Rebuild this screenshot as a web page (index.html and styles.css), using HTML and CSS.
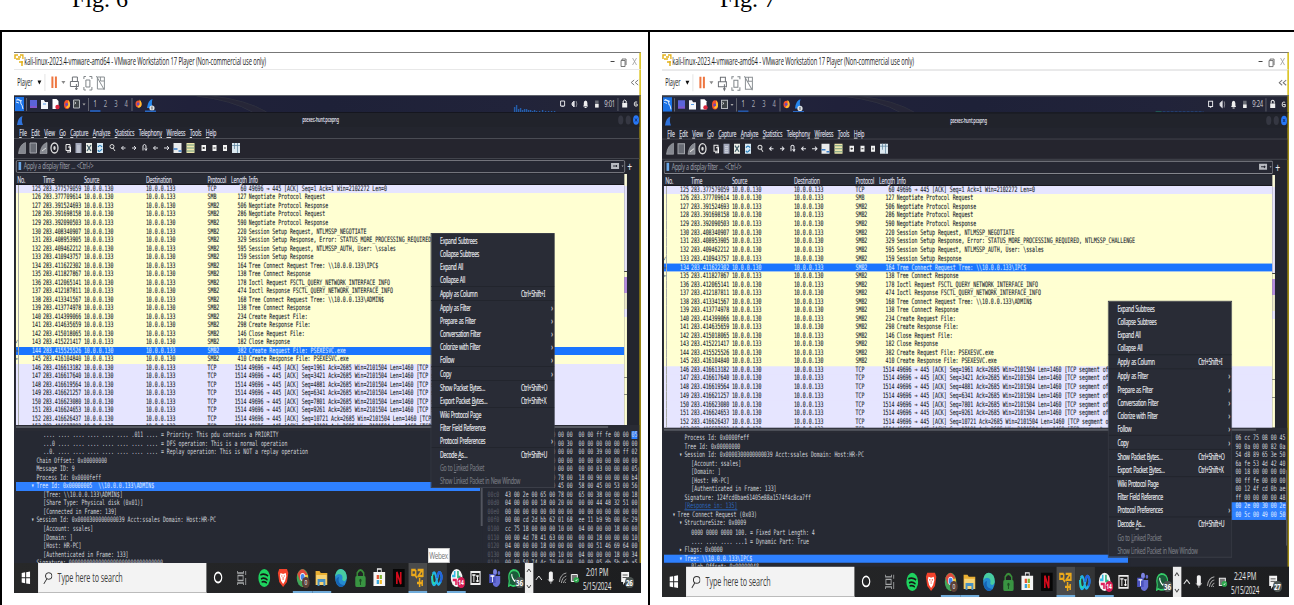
FILE: index.html
```html
<!DOCTYPE html>
<html lang="en">
<head>
<meta charset="utf-8">
<title>Figures</title>
<link rel="stylesheet" href="styles.css">
</head>
<body>
<div class="captions"><div class="caption">Fig. 6</div><div class="caption">Fig. 7</div></div>
<div class="figures">
  <div class="figure"><div class="shot"><div class="screen" id="left"></div></div></div>
  <div class="figure"><div class="shot shot-tall"><div class="screen" id="right"></div></div></div>
</div>
<script src="app.js"></script>
</body>
</html>
```

FILE: styles.css
```css
* { box-sizing: border-box; }
body { margin: 0; width: 1294px; height: 605px; overflow: hidden; background: #fff; }
.captions { display: grid; grid-template-columns: 648px 646px; height: 30px; overflow: hidden; font: 24px/28px "Liberation Serif", serif; color: #000; }
.caption { padding-left: 72px; margin-top: -15px; height: 28px; }
.figures { display: grid; grid-template-columns: 648px 646px; height: 575px; border-top: 2px solid #000; }
.figure { border-left: 2px solid #000; padding: 20px 0 0 12px; }
.shot { width: 627px; height: 541px; overflow: hidden; }
.shot-tall { height: 545px; }
/* the virtual desktop is laid out wide and squeezed into the figure */
.screen { position: relative; width: 964.6px; height: 541px; transform: scale(.65, 1); transform-origin: 0 0; display: flex; flex-direction: column; font: 7.7px/10px "Noto Sans", sans-serif; color: #d9dbe0; background: #23252e; white-space: nowrap; }
.shot-tall .screen { transform: scale(.65, 1.0074); }
svg { display: block; flex: none; }
u { text-underline-offset: 1px; text-decoration-thickness: .6px; }

.title { height: 17.5px; background: #fff; border-top: 1px solid #777; border-bottom: 1px solid #e8e8e8; border-right: 3px solid #dcc52c; display: flex; align-items: center; color: #1a1a1a; font: 11.3px/15px "Open Sans", sans-serif; letter-spacing: -.18px; }
.title-text { padding: 0 0 0 1px; transform: scaleX(.79); transform-origin: 0 0; }
.player { height: 25.5px; background: #fff; border-right: 3px solid #dcc52c; display: flex; align-items: center; color: #222; font: 10.6px/14px "Open Sans", sans-serif; padding-left: 5px; letter-spacing: -.2px; }
.player-text { width: 30.5px; transform: scaleX(.8); transform-origin: 0 0; }
.spring { flex: 1; }

.kali { height: 17px; border-top: 1px solid #60636b; border-right: 3px solid #9b8612; background: linear-gradient(90deg, #25293a, #20213a 28%, #1e2138 50%, #21233a 80%, #242635); display: flex; font: 9px/16px "Noto Sans", sans-serif; }
.ws { width: 15.9px; text-align: center; color: #a7a9b4; flex: none; }
.ws-on { border-bottom: 2px solid #2457a8; color: #c8cad2; }
.clock { width: 23px; text-align: center; letter-spacing: -.3px; color: #cacbd2; }

.app { height: 451px; border-right: 3px solid #9b8612; display: flex; flex-direction: column; background: #23252e; }
.apptitle { height: 15px; display: flex; align-items: center; background: #21232b; border-top: 1px solid #15161f; }
.apptitle-text { flex: 1; text-align: center; font-size: 6.4px; letter-spacing: -.35px; font-weight: 600; }
.menubar { height: 12.5px; display: flex; padding: 1px 0 0 8px; font-size: 8.6px; letter-spacing: -.32px; border-bottom: 1px solid #4a4c54; }
.menus { display: flex; gap: 7.5px; transform: scaleX(.925); transform-origin: 0 0; -webkit-text-stroke: .15px; }
.tools { height: 19.5px; border-bottom: 1px solid #42444c; background: #25252e; }
.filterbar { height: 15px; display: flex; align-items: center; padding-left: 3px; }
.filter { width: 937px; height: 12.5px; border: 1.4px solid #84868d; border-radius: 2px; background: #262833; display: flex; align-items: center; font-size: 8.3px; letter-spacing: -.42px; word-spacing: .5px; color: #9a9da6; }
.mark { width: 4px; height: 8px; background: #6aa8e8; margin: 0 4px 0 3px; }
.plus { width: 14px; text-align: center; font: 13px/10px "Noto Sans", sans-serif; color: #eee; }

.packets { height: 252px; display: flex; padding-left: 3px; overflow: hidden; }
.list { width: 936px; }
.grid { display: grid; grid-template-columns: 38.4px 3.2px 63px 95.4px 94.8px 36px 23.8px 3.6px 1fr; height: 8.525px; }
.head { height: 11px; background: #292c36; font-size: 8.1px; line-height: 11px; letter-spacing: -.38px; color: #d9dbe0; border-bottom: 1px solid #17181d; -webkit-text-stroke: .15px; }
.head :first-child { padding-left: 2px; }
.rows { height: 241px; overflow: hidden; font: 7.52px/8.525px "DejaVu Sans Mono", monospace; color: #20262e; background: #e6e5ff; -webkit-text-stroke: .12px; }
.rows .grid { background: #ffffd2; box-shadow: 0 .6px 0 #ffffd2; }
.rows .tcp { background: #e6e5ff; box-shadow: 0 .6px 0 #e6e5ff; }
.rows .sel { background: #1a75ff; box-shadow: none; color: #d4e5ff; }
.rows .grid > span { position: relative; z-index: 1; }
.num { text-align: right; }
.mark-cell { text-align: right; background: linear-gradient(90deg, transparent 3.5px, #a9aba8 3.5px 4.5px, transparent 4.5px); display: flex; }
.mark-cell i { width: 10px; margin-left: -1px; font-style: normal; color: #555; text-align: left; }
.mark-cell b { flex: 1; font-weight: 400; }
.map { width: 4px; background: linear-gradient(#faf9d8 0 12px, #e6e4fa 12px 97px, #41443a 97px 98px, #ffffd2 98px 103px, #b78de0 103px 119px, #ece9c8 119px 135px, #e7e5ff 135px 143px, #ffffd2 143px 203px, #8c8d78 203px 204px, #ffffd2 204px 220px, #8c8d78 220px 221px, #ffffd2 221px); }
.split { height: 6px; padding: 1px 0 0 3px; background: #292b34; }
.bar { height: 2px; width: 911px; background: #565961; }

.lower { height: 132px; display: flex; padding-left: 3px; font: 7.52px/8.53px "DejaVu Sans Mono", monospace; overflow: hidden; color: #d3d6dc; background: #262933; }
.tree { width: 714px; overflow: hidden; flex: none; }
.line { height: 8.53px; white-space: pre; }
.line.on { background: #2e80ff; color: #e4efff; }
.line.link { color: #2c68bd; text-decoration: underline; text-decoration-thickness: .6px; text-underline-offset: 1px; }
.scroll { width: 4px; flex: none; background: #262933; padding-top: 20px; }
.thumb { width: 3px; height: 75px; background: #52555f; margin-left: 1px; }
.hex { width: 238.5px; flex: none; overflow: hidden; padding-left: 7.5px; }
.off { color: #5d606b; display: inline-block; width: 27px; }
.hi { background: #2e80ff; }
.hex .line.on { box-shadow: 0 .5px 0 #2e80ff; }
.on .off { background: #262933; }
.rail { flex: 1; }
.rail .thumb { height: 75px; margin: 36px 0 0; width: 2px; }

.menu { position: absolute; z-index: 2; left: 641.5px; top: 181.5px; width: 189px; height: 253px; background: #292c36; font-size: 8px; line-height: 13px; letter-spacing: -.45px; word-spacing: .6px; color: #e4e6ea; -webkit-text-stroke: .15px; outline: .5px solid #3b3e48; }
.shot-tall .menu { left: 686.7px; top: 247.8px; }
.item { height: 13px; display: flex; padding-left: 14px; }
.item span { width: 124.5px; }
.item.sub { justify-content: space-between; padding-right: 2px; }
.item b { font-weight: 400; }
.item.off-item { color: #73767e; }
.sep { height: 1px; background: #22252d; }

.taskbar { height: 30px; background: linear-gradient(90deg, #272829, #212224 60%, #1d1e20); display: flex; font-family: "Open Sans", sans-serif; color: #e9e9e9; }
.taskbar > div { flex: none; }
.start { width: 37px; padding: 8px 0 0 11px; }
.search { width: 258.5px; background: #f3f3f3; display: flex; align-items: center; color: #3d3d3d; font-size: 12.3px; letter-spacing: -.1px; border-bottom: 1px solid #bbb; }
.search svg { margin: 0 8px 0 8px; }
.search span { transform: scaleX(.9); transform-origin: 0 0; }
.cell { width: 29.6px; height: 30px; padding: 5px 0 0 4.8px; position: relative; }
.wide { width: 37.2px; padding-left: 8.6px; }
.active { background: #4a4b4c; }
.hover { background: #343536; }
.run { border-bottom: 2px solid #70abd9; }
.badge { position: absolute; left: 16px; top: 14px; font: 700 7.5px/11px "Open Sans", sans-serif; border-radius: 6px; color: #fff; text-align: center; min-width: 12px; }
.red { background: #d51b55; }
.brown { background: #5b4037; font-weight: 400; left: 14px; }
.gray { background: #4c5452; font-size: 9.5px; min-width: 14px; letter-spacing: -.3px; }
.updown { width: 12.5px; background: #ececec; margin-left: 2px; }
.tray { width: 73px; }
.when { width: 50px; font-size: 10.8px; line-height: 13.6px; letter-spacing: -.35px; text-align: center; padding-top: 2px; transform: scaleX(.9); }
.note { width: 29px; margin-left: 12px; position: relative; padding-top: 7px; }
.tooltip { position: absolute; z-index: 2; left: 636.5px; top: 496px; width: 33px; height: 15px; background: #fff; border: 1px solid #c9c9c9; color: #777; font: 9.8px/13px "Open Sans", sans-serif; display: flex; justify-content: center; letter-spacing: -.55px; }
```

FILE: app.js
```js
const A = '10.0.0.130', B = '10.0.0.133';
const seg = n => `49696 → 445 [ACK] Seq=${n} Ack=2685 Win=2101504 Len=1460 [TCP segment of a reassembled PDU]`;
const packets = [
  [125, '377579059', 0, 'TCP', 60, '49696 → 445 [ACK] Seq=1 Ack=1 Win=2102272 Len=0'],
  [126, '377709614', 0, 'SMB', 127, 'Negotiate Protocol Request'],
  [127, '391524693', 1, 'SMB2', 506, 'Negotiate Protocol Response'],
  [128, '391698158', 0, 'SMB2', 286, 'Negotiate Protocol Request'],
  [129, '392090503', 1, 'SMB2', 590, 'Negotiate Protocol Response'],
  [130, '408340907', 0, 'SMB2', 220, 'Session Setup Request, NTLMSSP_NEGOTIATE'],
  [131, '408953905', 1, 'SMB2', 329, 'Session Setup Response, Error: STATUS_MORE_PROCESSING_REQUIRED, NTLMSSP_CHALLENGE'],
  [132, '409462212', 0, 'SMB2', 595, 'Session Setup Request, NTLMSSP_AUTH, User: \\ssales'],
  [133, '410943757', 1, 'SMB2', 159, 'Session Setup Response'],
  [134, '411622302', 0, 'SMB2', 164, 'Tree Connect Request Tree: \\\\10.0.0.133\\IPC$'],
  [135, '411827867', 1, 'SMB2', 138, 'Tree Connect Response'],
  [136, '412065141', 0, 'SMB2', 178, 'Ioctl Request FSCTL_QUERY_NETWORK_INTERFACE_INFO'],
  [137, '412187811', 1, 'SMB2', 474, 'Ioctl Response FSCTL_QUERY_NETWORK_INTERFACE_INFO'],
  [138, '413341567', 0, 'SMB2', 168, 'Tree Connect Request Tree: \\\\10.0.0.133\\ADMIN$'],
  [139, '413774978', 1, 'SMB2', 138, 'Tree Connect Response'],
  [140, '414399066', 0, 'SMB2', 234, 'Create Request File:'],
  [141, '414635659', 1, 'SMB2', 298, 'Create Response File:'],
  [142, '415018065', 0, 'SMB2', 146, 'Close Request File:'],
  [143, '415221417', 1, 'SMB2', 182, 'Close Response'],
  [144, '415525526', 0, 'SMB2', 382, 'Create Request File: PSEXESVC.exe'],
  [145, '416104840', 1, 'SMB2', 410, 'Create Response File: PSEXESVC.exe'],
  [146, '416613182', 0, 'TCP', 1514, seg(1961)],
  [147, '416617640', 0, 'TCP', 1514, seg(3421)],
  [148, '416619564', 0, 'TCP', 1514, seg(4881)],
  [149, '416621257', 0, 'TCP', 1514, seg(6341)],
  [150, '416623080', 0, 'TCP', 1514, seg(7801)],
  [151, '416624653', 0, 'TCP', 1514, seg(9261)],
  [152, '416626437', 0, 'TCP', 1514, seg(10721)],
  [153, '416627982', 0, 'TCP', 1514, seg(12181)]
];

// Tree lines: [x of text, text, class, arrow]
const views = {
  left: {
    time: '9:01', wall: '2:01 PM', notes: 26, tip: true, sel: 144,
    graph: '<path d="M515 16v-5M517 16v-7M519 16v-3M521 16v-4M523 16v-2M525 16v-3M527 16v-3M529 16v-2M531 16v-2M533 16v-1M535 16v-2M537 16v-1M540 16v-1M543 16v-2M546 16v-1M549 16v-1M552 16v-1M555 16v-1" stroke="#245da9" stroke-width="1.4"/>',
    tree: [
      [42, '.... .... .... .... .... .... .011 .... = Priority: This pdu contains a PRIORITY'],
      [42, '...0 .... .... .... .... .... .... .... = DFS operation: This is a normal operation'],
      [42, '..0. .... .... .... .... .... .... .... = Replay operation: This is NOT a replay operation'],
      [31.5, 'Chain Offset: 0x00000000'], [31.5, 'Message ID: 9'], [31.5, 'Process Id: 0x0000feff'],
      [31.5, 'Tree Id: 0x00000005  \\\\10.0.0.133\\ADMIN$', 'on', '▾'],
      [42, '[Tree: \\\\10.0.0.133\\ADMIN$]'], [42, '[Share Type: Physical disk (0x01)]'], [42, '[Connected in Frame: 139]'],
      [31.5, 'Session Id: 0x0000300000000039 Acct:ssales Domain: Host:HR-PC', '', '▾'],
      [42, '[Account: ssales]'], [42, '[Domain: ]'], [42, '[Host: HR-PC]'], [42, '[Authenticated in Frame: 133]'],
      [31.5, 'Signature: 00000000000000000000000000000000']
    ],
    start: 0x50,
    hex: ['00 00 00 00 00 00 00 00  00 00 ff fe 00 00 *05', '00 00 00 00 00 00 00 30  00 00 00 00 00 00 00', '00 00 00 00 00 00 00 00  00 00 39 00 00 ff 02', '00 00 00 00 00 00 00 00  00 00 00 00 00 00 00', '00 00 00 00 00 00 00 00  00 00 03 00 00 00 05', '00 00 00 00 00 00 78 00  18 00 90 00 00 00 b4', '00 00 50 00 53 00 45 00  58 00 45 00 53 00 56', '43 00 2e 00 65 00 78 00  65 00 38 00 00 00 18', '04 00 00 00 18 00 20 00  00 00 44 48 32 51 00', '00 00 00 00 00 00 00 00  00 00 00 00 00 00 00', '00 00 cd 2d bb 62 01 68  ee 11 b9 9b 00 0c 29', 'cc 75 18 00 00 00 10 00  04 00 00 00 18 00 00', '00 00 4d 78 41 63 00 00  00 00 18 00 00 00 10', '04 00 00 00 18 00 00 00  00 00 51 46 69 64 00', '00 00 00 00 00 00 10 00  04 00 00 00 18 00 34', '00 00 50 74 4c 70 00 00  00 00 05 db 5b eb a5'],
    hexOn: []
  },
  right: {
    time: '9:24', wall: '2:24 PM', notes: 27, tip: false, sel: 134,
    graph: '<path d="M508 15.5h6" stroke="#1f8c6e"/><path d="M515 15.5h41" stroke="#2456a0" stroke-dasharray="3 1"/>',
    tree: [
      [31.5, 'Process Id: 0x0000feff'], [31.5, 'Tree Id: 0x00000000'],
      [31.5, 'Session Id: 0x0000300000000039 Acct:ssales Domain: Host:HR-PC', '', '▾'],
      [42, '[Account: ssales]'], [42, '[Domain: ]'], [42, '[Host: HR-PC]'], [42, '[Authenticated in Frame: 133]'],
      [31.5, 'Signature: 124fcd0bae61405e88a1574f4c8ca7ff'], [31.5, '[Response in: 135]', 'link'],
      [21, 'Tree Connect Request (0x03)', '', '▾'], [31.5, 'StructureSize: 0x0009', '', '▾'],
      [42, '0000 0000 0000 100. = Fixed Part Length: 4'], [42, '.... .... .... ...1 = Dynamic Part: True'],
      [31.5, 'Flags: 0x0000', '', '▸'], [31.5, 'Tree: \\\\10.0.0.133\\IPC$', 'on', '▾'], [42, 'Blob Offset: 0x00000048']
    ],
    start: 0,
    hex: ['06 cc 75 08 00 45', '90 0a 00 00 82 0a', '54 d8 89 65 3e 50', '6a fe 53 4d 42 40', '00 18 00 00 00 00', '00 ff fe 00 00 00', '00 12 4f cd 0b ae', 'ff 00 00 00 00 48', '00 2e 00 30 00 2e', '00 5c 00 49 00 50'].map(h => ' '.repeat(28) + h),
    hexOn: [8, 9]
  }
};

const menu = ['Expand Subtrees', 'Collapse Subtrees', 'Expand All', 'Collapse All', '-', 'Apply as Column|Ctrl+Shift+I', '-', 'Apply as Filter›', 'Prepare as Filter›', 'Conversation Filter›', 'Colorize with Filter›', 'Follow›', '-', 'Copy›', '-', 'Show Packet Bytes…|Ctrl+Shift+O', 'Export Packet <u>B</u>ytes…|Ctrl+Shift+X', '-', 'Wiki Protocol Page', 'Filter Field Reference', 'Protocol Preferences›', '-', 'Decode <u>A</u>s…|Ctrl+Shift+U', '!Go to <u>L</u>inked Packet', '!Show Linked Packet in New Window'];

const menuItem = m => {
  if (m === '-') return '<div class="sep"></div>';
  if (m.endsWith('›')) return `<div class="item sub"><span>${m.slice(0, -1)}</span><b>›</b></div>`;
  if (m[0] === '!') return `<div class="item off-item"><div>${m.slice(1)}</div></div>`;
  const [a, b] = m.split('|');
  return `<div class="item"><span>${a}</span>${b || ''}</div>`;
};

// Strip whose viewBox is in squeezed pixels, so strokes stay even
const strip = (x, w, h, body) => `<svg width="${w / .65}" height="${h}" viewBox="${x} 0 ${w} ${h}" preserveAspectRatio="none" fill="none">${body}</svg>`;
const ic = body => `<svg width="20" height="20" viewBox="0 0 20 20" fill="none">${body}</svg>`;

const fox = (x, y) => `<ellipse cx="${x}" cy="${y}" rx="3" ry="4.5" fill="#f4532c"/><path d="M${x + 1} ${y - 4.5}q3 3 1.8 6.5q-2 3-4 1q3-2 2.200-7.500z" fill="#ffbd2f"/><circle cx="${x - .3}" cy="${y}" r="1.400" fill="#694bbd"/>`;
const shark = (x, y, c) => `<path d="M${x} ${y + 9}q1-8 5.500-9q-1.500 5 .5 9z" fill="${c}"/>`;

const kaliIcons = strip(0, 76, 16,
  '<path d="M1 1h9v14H1z" fill="#1b72e6"/><path d="M2 4q5-1 5 4q1 0 2 5M3 3l5 2M2 6l3 1" stroke="#dcecff"/><path d="M12.500 2v13" stroke="#62656f"/>' +
  '<path d="M16 4h7v8h-7z" fill="#5b64d8"/><path d="M16 10h7v2h-7z" fill="#8257ca"/>' +
  '<path d="M27 4h3l1 2h3v7h-7z" fill="#f3f5fa"/><path d="M29 8h3" stroke="#549bea"/>' +
  '<path d="M38.500 3h4l2 2v8h-6z" fill="#fff"/><circle cx="43.500" cy="11" r="2.200" fill="#da263d"/>' + fox(53, 8.5) +
  '<path d="M59.500 4h6v8h-6z" fill="#3d4347" stroke="#b5b9bd"/><path d="M60.500 6l1.500 1l-1.500 1" stroke="#fff" stroke-width=".7"/><path d="M68.500 7.500h3l-1.500 2z" fill="#aaa"/><path d="M74.500 2v13" stroke="#62656f"/>');
const kaliMid = strip(132, 28, 16, '<path d="M133 2v13" stroke="#62656f"/>' + fox(139.5, 8).replace('ry="4.5"', 'ry="3.5"') + shark(148, 3, '#2587ee') + '<circle cx="153" cy="12" r="2.600" fill="#dfe3e6"/><path d="M153 10.500v3" stroke="#333" stroke-width=".8"/><path d="M146 15.500h11" stroke="#2968c3" stroke-width="2"/>');
const wallpaper = '<path d="M197 0q35 4 56 16M212 0q35 4 55 16" stroke="#3a3c48" stroke-width=".7"/><path d="M197 0h15q35 4 55 16h-14q-21-12-56-16" fill="#292a38" opacity=".7"/>';
const kaliTray = '<path d="M561 5h4v5h-4zM562 10l1 1l1-1" stroke="#dfe0e5"/><path d="M572.500 7l2-2v6l-2-2z" stroke="#dfe0e5" fill="#dfe0e5"/><path d="M576.500 5q1.500 3 0 6" stroke="#85878f"/><path d="M583.500 10.500l.7-1.500v-2q0-2.500 1.800-2.500t1.800 2.500v2l.7 1.500z" fill="#eee"/><path d="M585 11.500h2" stroke="#eee"/><path d="M595.500 4.500h3.500v7h-3.500z" fill="#6b6e77"/><path d="M595.500 8h3.500v3.500h-3.500z" fill="#eee"/>';
const kaliEnd = strip(617, 22, 16, '<path d="M617.700 2v13" stroke="#62656f"/><path d="M622 7h5v4.500h-5z" fill="#eee"/><path d="M623 7v-2q1.500-2 3 0v2" stroke="#eee"/><path d="M637 6q-3-1-3 2t3 2v-2h-2" stroke="#ddd"/>');

const doc = (x, c) => `<path d="M${x} 4h6v10h-6z" fill="${c}"/>`;
const tools = strip(0, 625, 19,
  '<path d="M4.500 14.500q1-9 7-11v11zM26 14.500q1-9 7-11v11z" fill="#858890" stroke="#aeb0b6" stroke-width=".6"/><path d="M28 12l4-3" stroke="#ddd"/>' +
  '<path d="M16 4h6.500v10h-6.500z" fill="#686b74" stroke="#a4a6ad"/>' +
  '<ellipse cx="40.500" cy="9" rx="3.500" ry="5" stroke="#ddd" stroke-width="1.300"/><ellipse cx="40.500" cy="9" rx="1.200" ry="2" fill="#ddd"/>' +
  '<path d="M52 5.500h4v6h-4z" stroke="#eee"/><path d="M54 8h2.500v5h-3.500" stroke="#fff"/>' +
  doc(61.5, '#a4a9bb') + '<path d="M63 7h3M63 9h3M63 11h3M63 13h3" stroke="#e8ebf1" stroke-width=".7"/>' +
  doc(72, '#eceee8') + '<path d="M73 6l4 6M77 6l-4 6" stroke="#415d68" stroke-width="1.200"/>' +
  doc(83, '#d8eaf5') + '<path d="M84 8q2-3 4 0M88 10q-3 4-4 1" stroke="#267cba" stroke-width="1.200"/>' +
  '<circle cx="98" cy="7.500" r="2" stroke="#ddd" stroke-width="1"/><path d="M99 9l2 3" stroke="#ddd"/>' +
  '<path d="M111.500 9h-4m2-2l-2 2l2 2M118 9h4m-2-2l2 2l-2 2M129 11.500v-5q1.500-2 3 0v4m-1.500-1l1.500 2l1-2M144 9h-4.500m2-2l-2 2l2 2M150 9h5m-2-2l2 2l-2 2" stroke="#e2e3e8"/>' +
  '<path d="M159.500 4h8v10h-8z" fill="#e9ebec"/><path d="M159.500 10h4M164.500 12h3" stroke="#3d80ca" stroke-width="1.500"/>' +
  '<path d="M172.500 4h8v10h-8z" fill="#eee6ab"/><path d="M172.500 6h8M172.500 9h8M172.500 12h8" stroke="#719c83"/>' +
  '<path d="M187.500 6h4.500v6h-4.500zM198.500 6h4v6h-4zM209 6h4v6h-4z" fill="#f2f2f2"/><path d="M188.500 9h2.500M189.700 8v2M199.500 9h2M211 8v2" stroke="#333"/>' +
  '<path d="M218 4h8v10h-8z" fill="#dce8f0"/><path d="M218 6.500h8M220.500 4v6M223.500 4v10" stroke="#58809b" stroke-width=".7"/>');

const taskIcons = [
  ['wide', '<ellipse cx="10" cy="9.500" rx="5.600" ry="5" stroke="#fff" stroke-width="1.800"/>'],
  ['wide', '<path d="M3 3v2h9v-2M3 17v-2h9v2M3.500 7.500h8v5h-8zM15.500 3v4M15.500 10v7" stroke="#a7a9aa" stroke-width="1.300"/>'],
  ['', '<circle cx="10" cy="10" r="9" fill="#1ed35f"/><path d="M4 7q6-2 12 1M5 11q5-2 10 1M6 14q4-1 8 1" stroke="#151515" stroke-width="1.700"/>'],
  ['', '<path d="M4 1h12l2 4l-2 9l-6 5l-6-5l-2-9z" fill="#f3432c"/><path d="M6 5l4 1l4-1l1 3l-2 5l-3 3l-3-3l-2-5z" fill="#fff"/><path d="M7 8h2M11 8h2M10 9v3" stroke="#f3432c"/>'],
  ['run', '<circle cx="10" cy="10" r="9" fill="#41a75a"/><path d="M2 6q8-10 16 1h-8l-4 6z" fill="#df4b3c"/><path d="M18 7q2 10-8 12l4-9l-2-3z" fill="#f3c63b"/><circle cx="10" cy="9" r="4" fill="#f5f5f5"/><circle cx="10" cy="9" r="3" fill="#4686ea"/>', '<span class="badge brown">0</span>'],
  ['run', '<path d="M1 3h6l2 2h10v12H1z" fill="#e9af32"/><path d="M2 7h16v10H2z" fill="#f6d477"/><path d="M4 11h12v7h-3v-4h-6v4h-3z" fill="#4791c5"/>'],
  ['', '<circle cx="10" cy="10" r="9" fill="#258bd0"/><path d="M1 9q1-8 9-8q9 1 9 9q-2 5-7 2q2-6-5-6q-4 0-6 3" fill="#48cda0"/><path d="M7 9q-3 8 9 8q-8 5-13-2q-2-5 4-6" fill="#1663b4"/>'],
  ['', '<path d="M5 8v-3q5-6 10 0v3" stroke="#398e39" stroke-width="2.200"/><rect x="2" y="8" width="16" height="11" rx="2" fill="#399442"/><circle cx="10" cy="12.500" r="1.700" fill="#1c4e23"/><path d="M10 13v4" stroke="#1c4e23" stroke-width="1.500"/>'],
  ['', '<path d="M7 4v-3h6v3" stroke="#eee" stroke-width="1.300"/><path d="M1 4h18v14H1z" fill="#f5f5f5"/><path d="M6 7h3.500v4H6z" fill="#e75434"/><path d="M10.500 7h3.500v4h-3.500z" fill="#7bb52f"/><path d="M6 12h3.500v4H6z" fill="#36a3dd"/><path d="M10.500 12h3.500v4h-3.500z" fill="#efb829"/>'],
  ['', '<path d="M1 1h18v18H1z" fill="#060606"/><path d="M7 16V4l6 12V4" stroke="#d60b1c" stroke-width="2.500"/>'],
  ['active run', '<path d="M1 8V2h6M1 7h6V2M5 6l4 4M10 2h8v7M11 8h7M17 2l-7 7M13 10v9M9 15h9M17 12v6" stroke="#eba91b" stroke-width="2.300"/>'],
  ['hover', '<path d="M3 6q4-4 6 5t6 3q3-4 1-8q-3-4-5 2t-4 8q-5 3-5-8" stroke="#21b2e7" stroke-width="3"/><path d="M10 10q1-7 5-5q4 4 0 9" stroke="#2462df" stroke-width="3"/><path d="M3 6q-1 11 4 9" stroke="#2adda5" stroke-width="2"/>'],
  ['run', '<circle cx="10" cy="10" r="9" fill="#f6f6f6"/><path d="M7 3v6M3 8h5" stroke="#36bce7" stroke-width="2.500"/><path d="M12 3v6h4" stroke="#31b37d" stroke-width="2.500"/><path d="M4 12h5v5" stroke="#e01e5a" stroke-width="2.500"/>', '<span class="badge red">14</span>'],
  ['', '<path d="M3 4h14v12H3z" fill="#202020" stroke="#eee" stroke-width="1.800"/><path d="M5 7h5M7.500 7v7M11 8h4M13 8v6M11 13h4" stroke="#fff" stroke-width="1.400"/>'],
  ['', '<circle cx="10" cy="4" r="3" fill="#7c83e2"/><circle cx="16" cy="5" r="2" fill="#6168cb"/><path d="M6 8h12v7q-5 7-11 2z" fill="#666dd5"/><path d="M1 6h10v9H1z" fill="#4b53bd"/><path d="M3 8h6M6 8v6" stroke="#fff" stroke-width="1.300"/>'],
  ['', '<path d="M2 18l1-5q-3-9 6-11q10 0 10 8t-10 8q-2 0-4-1z" fill="#1a5c3a" stroke="#35cd69" stroke-width="1.800"/><path d="M7 6q-1 3 4 7l3-1" stroke="#fff" stroke-width="1.600"/>', '<span class="badge gray">36</span>']
];

const trayArt = strip(520, 52, 30, '<path d="M522.500 17l3-4l3 4" stroke="#ddd"/><rect x="535.500" y="8.500" width="4" height="10" rx="1.500" fill="#f2f2f2"/><path d="M534.500 16q3 6 6 0M537.500 18v3" stroke="#c9c9c9" stroke-width=".7"/><path d="M546 19q1-8 7-9M548 20q1-6 5-7M550 20q1-3 3-4M552 19v1" stroke="#a5a5a5"/><path d="M558 11.500h6v7h-6z" fill="#777" stroke="#eee"/><circle cx="563" cy="17" r="2.800" fill="#2da84d"/><path d="M562 17l1 1l1-2" stroke="#fff" stroke-width=".6"/>');

function render(id) {
  const v = views[id];
  const row = p => {
    const m = p[0] === v.sel ? '→' : p[0] === v.sel + 1 ? '←' : p[0] === v.sel - 1 ? '✓' : '';
    return `<div class="grid ${p[0] === v.sel ? 'sel' : p[3] === 'TCP' ? 'tcp' : ''}"><span class="mark-cell"><i>${m}</i><b>${p[0]}</b></span><span></span><span>283.${p[1]}</span><span>${p[2] ? B : A}</span><span>${p[2] ? A : B}</span><span>${p[3]}</span><span class="num">${p[4]}</span><span></span><span>${p[5]}</span></div>`;
  };
  const line = l => `<div class="line ${l[2] || ''}" style="padding-left:${l[0] - (l[3] ? 8 : 0)}px">${l[3] ? `<span style="display:inline-block;width:8px">${l[3]}</span>` : ''}${l[1]}</div>`;
  const hex = (h, i) => `<div class="line ${v.hexOn.includes(i) ? 'on' : ''}"><span class="off">${(v.start + i * 16).toString(16).padStart(4, '0')}</span>${h.replace(/\*(..)/, '<span class="hi">$1</span>')}</div>`;
  document.getElementById(id).innerHTML = `
  <div class="title">${strip(0, 10, 16, '<path d="M1 6V2h3M6 2h3v4M2 6h4M8 8v5M5 9h4M4 4h3" stroke="#e4b21b" stroke-width="1.500"/>')}<span class="title-text">kali-linux-2023.4-vmware-amd64 - VMware Workstation 17 Player (Non-commercial use only)</span><span class="spring"></span>
    ${strip(596.5, 29, 16, '<path d="M597 8.500h4" stroke="#444"/><path d="M607.500 7.500h4v6h-4zM608.500 7V6h4v6" stroke="#555" stroke-width=".8"/><path d="M619 5l4 7M623 5l-4 7" stroke="#999" stroke-width=".8"/>')}</div>
  <div class="player"><span class="player-text">Player</span>
    ${strip(26, 68, 25, '<path d="M26 10.500h4l-2 4z" fill="#111"/><path d="M33.500 4v17" stroke="#e5e5e5"/><path d="M41 6.500v11.500M44.500 6.500v11.500" stroke="#ee7640" stroke-width="2"/><path d="M50 11h4l-2 3z" fill="#888"/><path d="M61 12V7h5v5M59 11.500h8v5h-8zM65 14v6m-1-2l1 2l1-2" stroke="#6d7076"/><path d="M72.500 9V6.500h2M78 6.500h2.500V9M80.500 17v3H78M74.500 20h-2v-3M74.500 10h4v7h-4z" stroke="#7f8589"/><path d="M86 7h7v12h-7zM85 6l8 14M89 7v4h4" stroke="#8a8f93"/>')}
    <span class="spring"></span>${strip(615, 9, 25, '<path d="M619 10l-3 2.500l3 2.500M623 10l-3 2.500l3 2.500" stroke="#777"/>')}</div>
  <div class="kali">${kaliIcons}<span class="ws ws-on">1</span><span class="ws">2</span><span class="ws">3</span><span class="ws">4</span>${kaliMid}${strip(160, 441, 16, wallpaper + v.graph + kaliTray)}<span class="spring"></span><span class="clock">${v.time}</span>${kaliEnd}</div>
  <div class="app">
    <div class="apptitle">${strip(0, 12, 14, shark(3, 3, '#2f73db'))}<span class="apptitle-text">psexec-hunt.pcapng</span>${strip(601, 24, 14, '<ellipse cx="606.500" cy="7" rx="2.600" ry="4.500" fill="#353742"/><ellipse cx="614" cy="7" rx="2.600" ry="4.500" fill="#353742"/><ellipse cx="621.800" cy="7" rx="3" ry="4.800" fill="#2777f5"/><path d="M620.800 5.500l2 3M622.800 5.500l-2 3" stroke="#102b6c" stroke-width=".8"/>')}</div>
    <div class="menubar"><div class="menus">${['File', 'Edit', 'View', 'Go', 'Capture', 'Analyze', 'Statistics', 'Telephony|', 'Wireless', 'Tools', 'Help'].map(m => m.endsWith('|') ? '<span>Telephon<u>y</u></span>' : `<span><u>${m[0]}</u>${m.slice(1)}</span>`).join('')}</div></div>
    <div class="tools">${tools}</div>
    <div class="filterbar"><div class="filter"><i class="mark"></i><span>Apply a display filter … &lt;Ctrl-/&gt;</span><span class="spring"></span>${strip(598, 14, 10, '<path d="M599 2h8v6h-8z" fill="#b8bac0"/><path d="M601 5h4m-1-1l1 1l-1 1" stroke="#262833"/><path d="M609.500 4.500h2l-1 1.500z" fill="#aaa"/>')}</div><span class="plus">+</span></div>
    <div class="packets"><div class="list"><div class="grid head"><span>No.</span><span></span><span>Time</span><span>Source</span><span>Destination</span><span>Protocol</span><span>Length</span><span></span><span>Info</span></div><div class="rows">${packets.map(row).join('')}</div></div><div class="map"></div></div>
    <div class="split"><div class="bar"></div></div>
    <div class="lower"><div class="tree">${v.tree.map(line).join('')}</div><div class="scroll"><div class="thumb"></div></div><div class="hex">${v.hex.map(hex).join('')}</div><div class="rail"><div class="thumb"></div></div></div>
  </div>
  <div class="taskbar"><div class="start">${strip(21, 9, 14, '<path d="M21.500 2l3.500-.7v5h-3.500zM26 1.200l4-.7v5.800h-4zM21.500 7.300h3.500v5l-3.500-.7zM26 7.300h4v5.800l-4-.7z" fill="#fff"/>')}</div>
    <div class="search">${strip(0, 9, 16, '<circle cx="5.500" cy="6" r="3.300" stroke="#333"/><path d="M3.500 9l-3 5" stroke="#333"/>')}<span>Type here to search</span></div>
    ${taskIcons.map(t => `<div class="cell ${t[0]}">${ic(t[1])}${t[2] || ''}</div>`).join('')}
    <div class="updown">${strip(0, 8, 30, '<path d="M2 9l2-3l2 3M2 22l2 3l2-3" stroke="#444"/>')}</div>
    <div class="tray">${trayArt}</div><div class="when">${v.wall}<br>5/15/2024</div>
    <div class="note">${strip(611, 12, 18, '<path d="M611 2h8v10h-4l-2 3v-3h-2z" fill="#f3f3f3"/><path d="M612.500 5h5M612.500 7.500h5" stroke="#333" stroke-width=".8"/>')}<span class="badge gray" style="left:6px">${v.notes}</span></div></div>
  <div class="menu">${menu.map(menuItem).join('')}</div>
  ${v.tip ? '<div class="tooltip">Webex</div>' : ''}`;
}

render('left');
render('right');
```
